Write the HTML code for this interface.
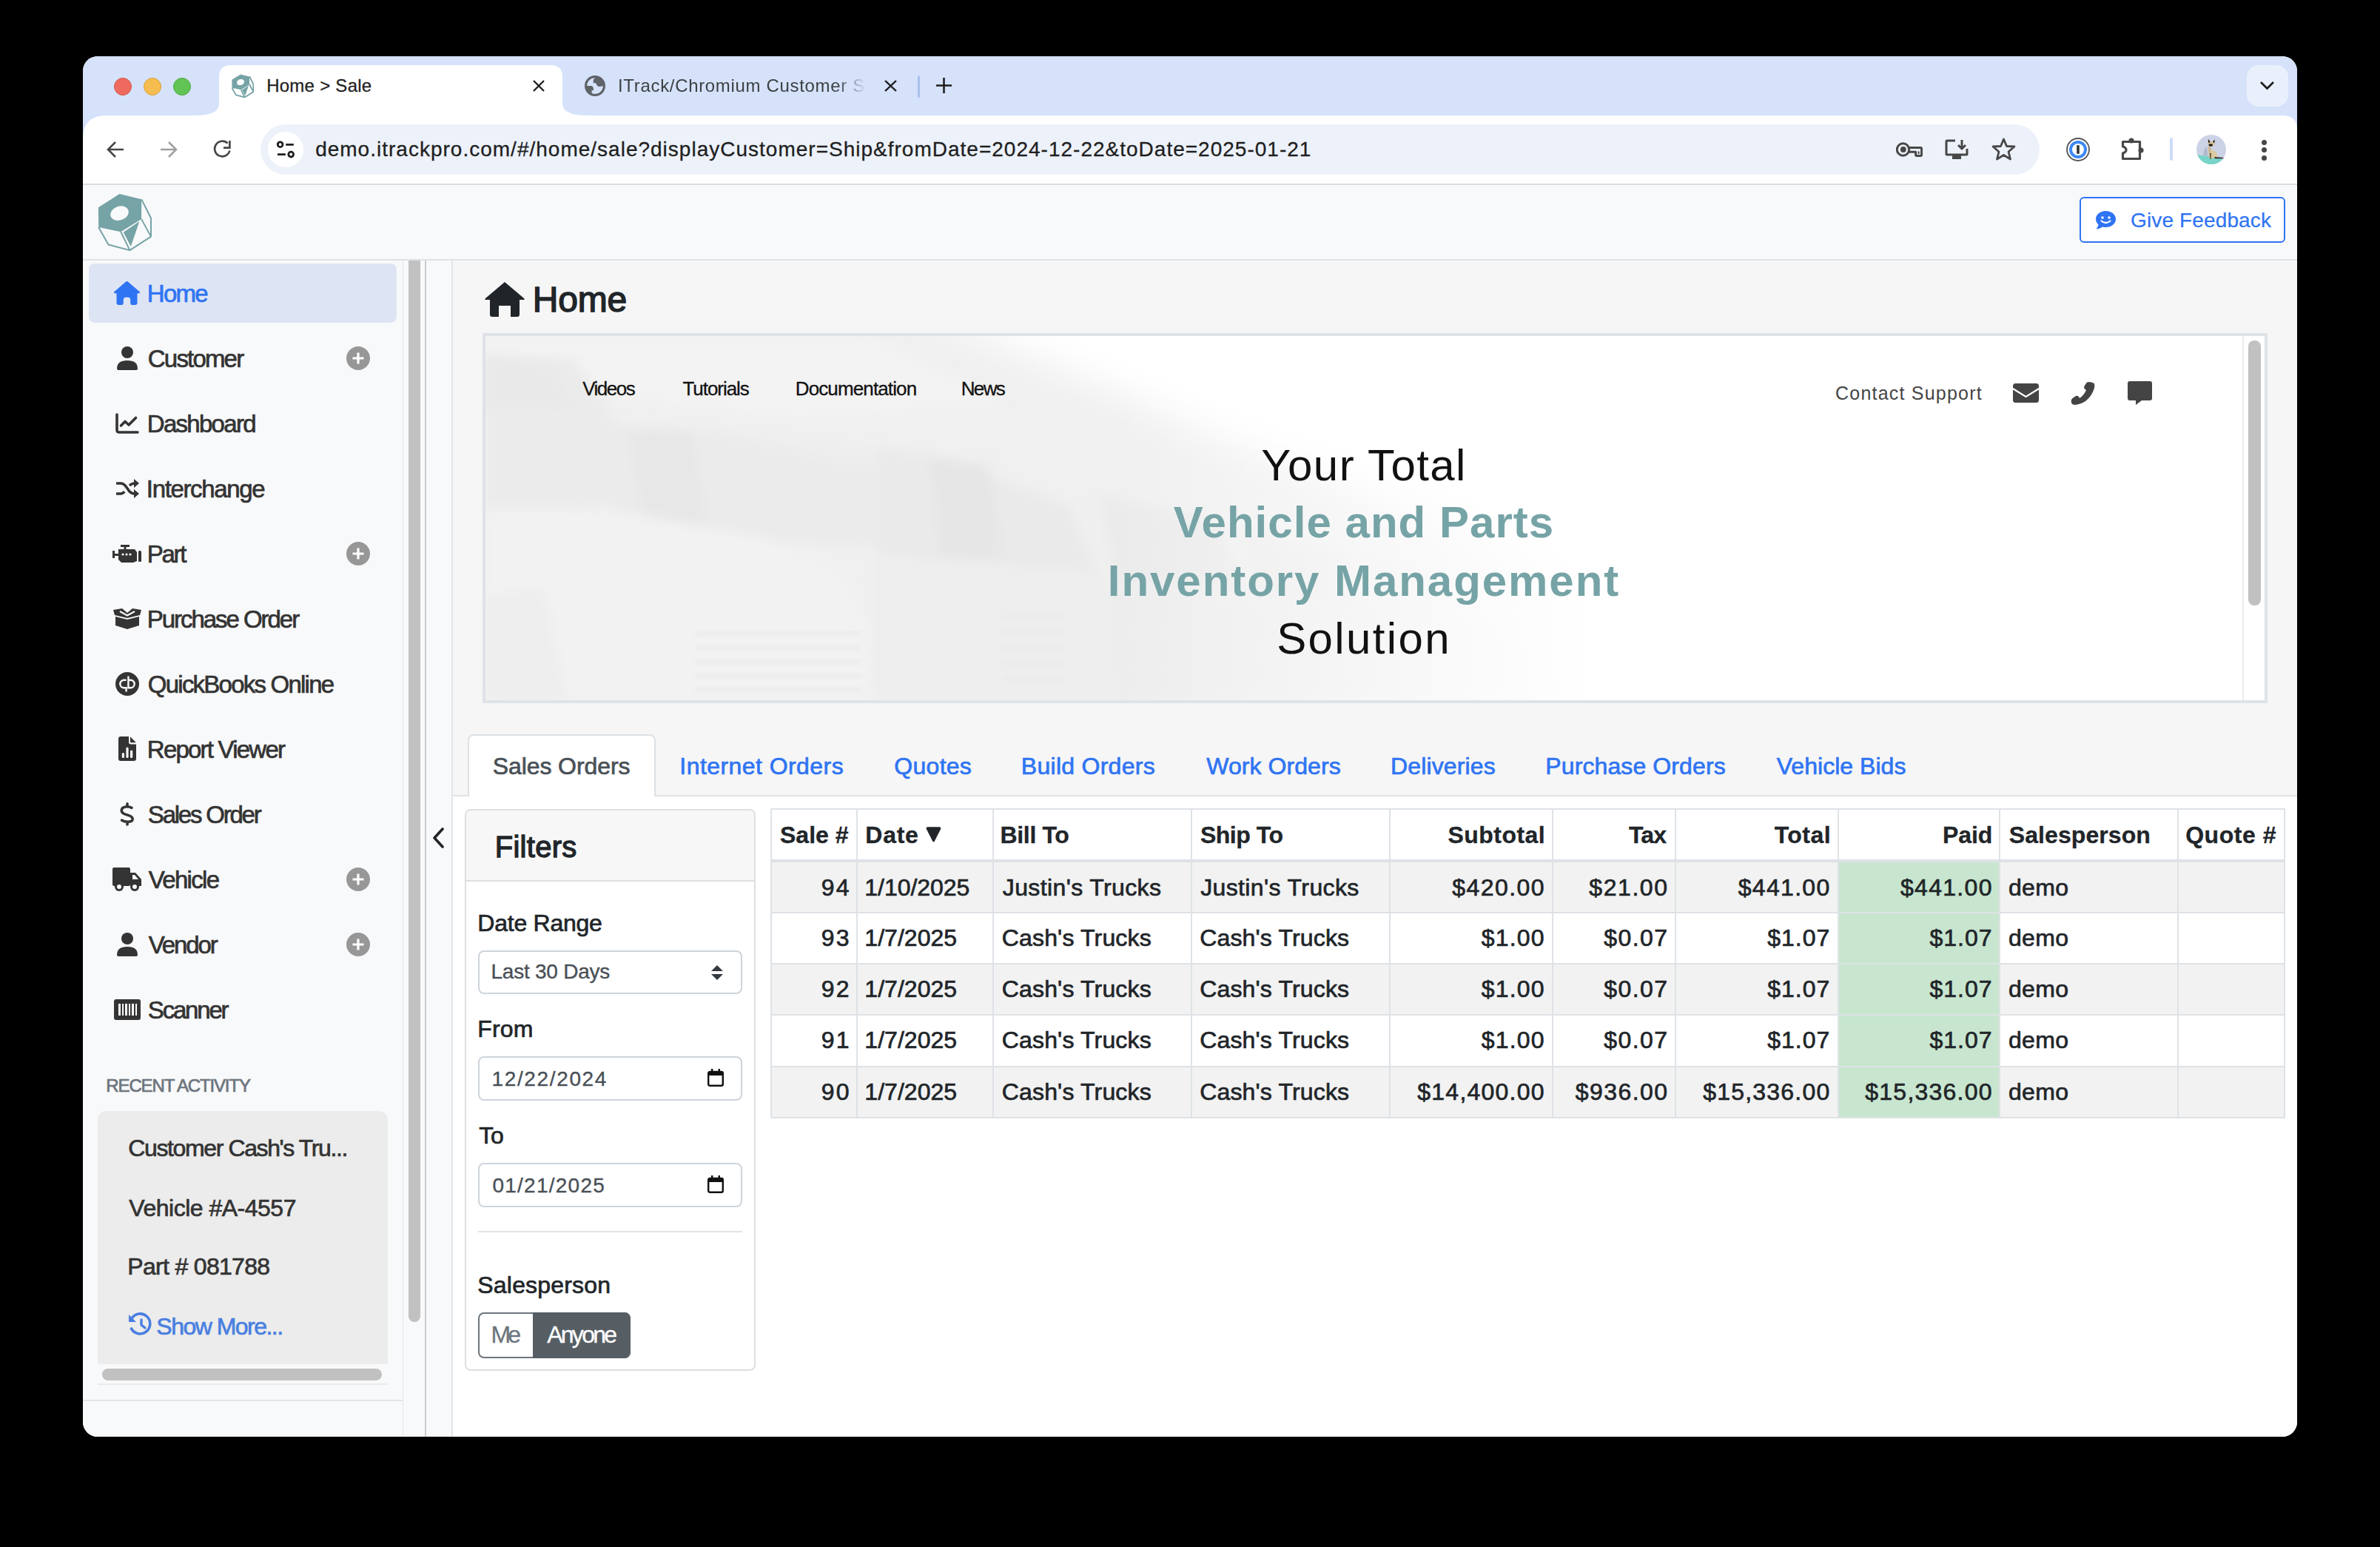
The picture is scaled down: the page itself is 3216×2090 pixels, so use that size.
<!DOCTYPE html>
<html><head><meta charset="utf-8"><title>Home &gt; Sale</title>
<style>
html,body{margin:0;padding:0;}
body{width:3216px;height:2090px;background:#000;position:relative;overflow:hidden;font-family:'Liberation Sans', sans-serif;}
.a{position:absolute;box-sizing:border-box;}
.t{position:absolute;white-space:nowrap;font-family:'Liberation Sans', sans-serif;}
#win{position:absolute;left:0;top:0;width:3216px;height:2090px;clip-path:inset(76px 112px 149px 112px round 20px);background:#fff;}
</style></head><body><div id="win">
<div class="a" style="left:112px;top:76px;width:2992px;height:80px;background:#d5e2fa;"></div>
<div class="a" style="left:154px;top:105px;width:24px;height:24px;background:#ee6a5f;border-radius:50%;border:1px solid #d55548;"></div>
<div class="a" style="left:194px;top:105px;width:24px;height:24px;background:#f5bd4f;border-radius:50%;border:1px solid #d9a13a;"></div>
<div class="a" style="left:234px;top:105px;width:24px;height:24px;background:#61c454;border-radius:50%;border:1px solid #4ea83f;"></div>
<svg class="a" style="left:264px;top:88px;width:530px;height:68px" viewBox="0 0 530 68"><path d="M0 68 Q32 68 32 52 L32 16 Q32 0 48 0 L480 0 Q496 0 496 16 L496 52 Q496 68 530 68 Z" fill="#fff"/></svg>
<svg class="a" style="left:313px;top:100px;width:30px;height:32px;" viewBox="11 5 74 79" preserveAspectRatio="none"><path d="M11.9 24.4 L40.7 6.1 L70.7 13.4 L70.4 40.1 L42.5 57.6 L12.2 51.2 Z M28.6 32.3 A12.2 9.2 -20 1 0 52.8 32.3 A12.2 9.2 -20 1 0 28.6 32.3 Z" fill="#76a3a6" fill-rule="evenodd"/><path d="M12.2 51.2 L25.6 75 L54.7 82.6 L83.5 64 L83.5 39 L70.7 13.4 M42.5 57.6 L54.7 82.6 M70.4 40.1 L83.5 64" fill="none" stroke="#76a3a6" stroke-width="4.5" stroke-linejoin="round"/><polygon points="46,58.2 67.8,43.3 56.1,77.4" fill="#76a3a6"/></svg>
<div id="t0" class="t" style="left:360.15px;top:103.7px;font-size:24px;line-height:24px;color:#1f1f1f;letter-spacing:0.264px;-webkit-text-stroke:0.3px #1f1f1f;">Home &gt; Sale</div>
<svg class="a" style="left:720px;top:108px;width:16px;height:16px;" viewBox="0 0 16 16" preserveAspectRatio="none"><path d="M1 1 L15 15 M15 1 L1 15" stroke="#1f1f1f" stroke-width="2.4"/></svg>
<svg class="a" style="left:790px;top:102px;width:28px;height:28px;" viewBox="0 0 28 28" preserveAspectRatio="none"><circle cx="14" cy="14" r="12.4" fill="none" stroke="#5f6368" stroke-width="3.2"/><path d="M16.6 2.2 Q13.2 3 11.8 5.8 L11.8 10.2 L15.3 10.3 Q15.6 13.2 18.5 14.8 Q22 15.6 26 13.6 L26 8 L21 2.5 Z M1.8 14 H8.5 Q11.6 14.3 11.9 17.6 V20.3 H9.6 V25 L5.5 23.5 L2 18 Z" fill="#5f6368"/></svg>
<div id="t1" class="t" style="left:835.00px;top:103.7px;font-size:24px;line-height:24px;color:#3c4043;letter-spacing:0.673px;-webkit-mask-image:linear-gradient(90deg,#000 295px,transparent 335px);">ITrack/Chromium Customer Se</div>
<svg class="a" style="left:1195px;top:108px;width:17px;height:16px;" viewBox="0 0 16 16" preserveAspectRatio="none"><path d="M1 1 L15 15 M15 1 L1 15" stroke="#1f1f1f" stroke-width="2.4"/></svg>
<div class="a" style="left:1240px;top:102px;width:3px;height:30px;background:#a8c0ee;border-radius:2px;"></div>
<svg class="a" style="left:1265px;top:105px;width:21px;height:21px;" viewBox="0 0 21 21" preserveAspectRatio="none"><path d="M10.5 0 V21 M0 10.5 H21" stroke="#1f1f1f" stroke-width="2.6"/></svg>
<div class="a" style="left:3036px;top:88px;width:56px;height:56px;background:#eaf0fb;border-radius:16px;"></div>
<svg class="a" style="left:3053px;top:109px;width:21px;height:13px;" viewBox="0 0 21 13" preserveAspectRatio="none"><path d="M2 2 L10.5 10.5 L19 2" fill="none" stroke="#1f1f1f" stroke-width="2.8"/></svg>
<div class="a" style="left:112px;top:156px;width:2992px;height:93px;background:#fff;border-radius:0;"></div>
<svg class="a" style="left:3084px;top:156px;width:20px;height:20px" viewBox="0 0 20 20"><path d="M0 0 H20 V20 Q20 0 0 0Z" fill="#d5e2fa"/></svg>
<svg class="a" style="left:112px;top:156px;width:32px;height:32px" viewBox="0 0 32 32"><path d="M0 0 H32 Q0 0 0 32Z" fill="#d5e2fa"/></svg>
<div class="a" style="left:112px;top:248px;width:2992px;height:2px;background:#dadce0;"></div>
<svg class="a" style="left:144px;top:190px;width:24px;height:24px;" viewBox="0 0 24 24" preserveAspectRatio="none"><path d="M23 12 H3 M12 2 L2 12 L12 22" fill="none" stroke="#474747" stroke-width="2.6"/></svg>
<svg class="a" style="left:216px;top:190px;width:24px;height:24px;" viewBox="0 0 24 24" preserveAspectRatio="none"><path d="M1 12 H21 M12 2 L22 12 L12 22" fill="none" stroke="#a0a0a0" stroke-width="2.6"/></svg>
<svg class="a" style="left:287px;top:189px;width:26px;height:25px;" viewBox="0 0 26 25" preserveAspectRatio="none"><path d="M20.6 4.6 A10.3 10.3 0 1 0 23.4 14.5" fill="none" stroke="#474747" stroke-width="2.7"/><path d="M15 10.6 H23.4 V1" fill="none" stroke="#474747" stroke-width="2.7"/></svg>
<div class="a" style="left:352px;top:168px;width:2404px;height:68px;background:#edf2fa;border-radius:34px;"></div>
<div class="a" style="left:362px;top:178px;width:48px;height:48px;background:#fff;border-radius:50%;"></div>
<svg class="a" style="left:374px;top:190px;width:24px;height:24px;" viewBox="0 0 24 24" preserveAspectRatio="none"><circle cx="4.6" cy="5.2" r="3.4" fill="none" stroke="#1f1f1f" stroke-width="2.8"/><path d="M12.2 5.3 H22.8 M1 18.6 H11.9" stroke="#1f1f1f" stroke-width="2.8"/><circle cx="19.2" cy="18.6" r="3.4" fill="none" stroke="#1f1f1f" stroke-width="2.8"/></svg>
<div id="t2" class="t" style="left:426.15px;top:188.3px;font-size:28px;line-height:28px;color:#1f1f1f;letter-spacing:1.005px;-webkit-text-stroke:0.3px #1f1f1f;">demo.itrackpro.com/#/home/sale?displayCustomer=Ship&amp;fromDate=2024-12-22&amp;toDate=2025-01-21</div>
<svg class="a" style="left:2562px;top:192px;width:36px;height:20px;" viewBox="0 0 36 20" preserveAspectRatio="none"><circle cx="9.5" cy="10" r="8.2" fill="none" stroke="#474747" stroke-width="3"/><circle cx="9.8" cy="10" r="3.9" fill="#474747"/><path d="M17.5 7.6 H33.3 Q34.6 7.6 34.6 9 V17 Q34.6 18.5 33.2 18.5 H28 Q26.6 18.5 26.6 17 V13.2 H17.5" fill="none" stroke="#474747" stroke-width="3" stroke-linejoin="round"/><path d="M30.6 12.5 V16" stroke="#474747" stroke-width="2"/></svg>
<svg class="a" style="left:2628px;top:188px;width:32px;height:29px;" viewBox="0 0 32 29" preserveAspectRatio="none"><path d="M14 2 H3 Q2 2 2 3 V20 Q2 21 3 21 H29 Q30 21 30 20 V13" fill="none" stroke="#474747" stroke-width="3"/><rect x="10" y="22" width="12" height="5" fill="#474747"/><path d="M23 1 V13 M18 8 L23 13 L28 8" fill="none" stroke="#474747" stroke-width="3"/></svg>
<svg class="a" style="left:2691px;top:186px;width:33px;height:31px;" viewBox="0 0 33 31" preserveAspectRatio="none"><path d="M16.5 2 L20.5 11.5 L31 12 L23 19 L25.5 29 L16.5 23.5 L7.5 29 L10 19 L2 12 L12.5 11.5 Z" fill="none" stroke="#474747" stroke-width="2.8" stroke-linejoin="round"/></svg>
<svg class="a" style="left:2792px;top:186px;width:32px;height:32px;" viewBox="0 0 32 32" preserveAspectRatio="none"><circle cx="16" cy="16" r="15" fill="none" stroke="#555" stroke-width="1.8"/><circle cx="16" cy="16" r="10" fill="none" stroke="#3d88f5" stroke-width="4"/><rect x="14.2" y="10.2" width="3.6" height="11.6" fill="#333"/></svg>
<svg class="a" style="left:2864px;top:182px;width:36px;height:36px;" viewBox="0 0 36 36" preserveAspectRatio="none"><path d="M4.5 9.5 H27.5 V32.5 H4.5 V25 Q9 23.5 9 20.5 Q9 17.5 4.5 16 Z" fill="none" stroke="#474747" stroke-width="3.2" stroke-linejoin="round"/><circle cx="16" cy="8" r="3.6" fill="#474747"/><circle cx="29" cy="21" r="3.6" fill="#474747"/></svg>
<div class="a" style="left:2932px;top:186px;width:4px;height:31px;background:#cbdcf7;border-radius:2px;"></div>
<svg class="a" style="left:2968px;top:182px;width:40px;height:40px;" viewBox="0 0 40 40" preserveAspectRatio="none"><defs><clipPath id="av"><circle cx="20" cy="20" r="20"/></clipPath></defs><g clip-path="url(#av)"><rect width="40" height="40" fill="#cdd3e6"/><path d="M9 28 L10.5 20 L14 16 L15.5 29 Z" fill="#b3b8c8"/><polygon points="0,27 40,32.5 40,40 0,40" fill="#78d4c8"/><path d="M15.5 16 L19.5 17 L20.5 32 L17.5 32.5 Z" fill="#cdb88f"/><path d="M19.5 21 Q26 21 27.5 25 L28 31 L20 32 Z" fill="#dcc9a0"/><path d="M24 30 L37 31 L37 32.2 L25 32.2 Z" fill="#3a2a26"/><path d="M15.8 5.8 L18.6 9.6 L22 9.6 L24.6 6.6 L24.4 12.5 L22.2 16 L17.3 16 L15.5 12 Z" fill="#d8c49a"/><path d="M15.8 5.8 L18.6 9.6 L16.2 11.5 Z M24.6 6.6 L22 9.6 L24.4 11.5 Z" fill="#1f1a18"/><ellipse cx="19.2" cy="14" rx="2.8" ry="1.8" fill="#1f1a18"/><path d="M18.2 25 L19.8 25 L19.5 33 L18.5 33 Z" fill="#4a3b2f"/></g></svg>
<div class="a" style="left:3056px;top:188.5px;width:7px;height:7.0px;background:#474747;border-radius:50%;"></div>
<div class="a" style="left:3056px;top:198.5px;width:7px;height:7.0px;background:#474747;border-radius:50%;"></div>
<div class="a" style="left:3056px;top:209.5px;width:7px;height:7.0px;background:#474747;border-radius:50%;"></div>
<div class="a" style="left:112px;top:250px;width:2992px;height:100px;background:#f8f9fa;"></div>
<div class="a" style="left:112px;top:350px;width:2992px;height:2px;background:#dee2e6;"></div>
<svg class="a" style="left:131.5px;top:260.5px;width:73.5px;height:78.5px;" viewBox="11 5 74 79" preserveAspectRatio="none"><path d="M11.9 24.4 L40.7 6.1 L70.7 13.4 L70.4 40.1 L42.5 57.6 L12.2 51.2 Z M28.6 32.3 A12.2 9.2 -20 1 0 52.8 32.3 A12.2 9.2 -20 1 0 28.6 32.3 Z" fill="#76a3a6" fill-rule="evenodd"/><path d="M12.2 51.2 L25.6 75 L54.7 82.6 L83.5 64 L83.5 39 L70.7 13.4 M42.5 57.6 L54.7 82.6 M70.4 40.1 L83.5 64" fill="none" stroke="#76a3a6" stroke-width="2.0" stroke-linejoin="round"/><polygon points="46,58.2 67.8,43.3 56.1,77.4" fill="#76a3a6"/></svg>
<div class="a" style="left:2810px;top:266px;width:278px;height:62px;background:#ffffff;border:2px solid #2f74f3;border-radius:6px;"></div>
<svg class="a" style="left:2831px;top:284px;width:29px;height:26px;" viewBox="0 0 29 26" preserveAspectRatio="none"><path d="M14.5 1 C6.5 1 1 6 1 12 C1 15 2.5 17.5 4.5 19.5 C4 22 2.5 24 1.5 25.5 C5 25.5 8 24 10 22.5 C11.5 23 13 23 14.5 23 C22.5 23 28 18 28 12 C28 6 22.5 1 14.5 1 Z" fill="#2f74f3"/><circle cx="10" cy="10" r="1.8" fill="#fff"/><circle cx="19" cy="10" r="1.8" fill="#fff"/><path d="M8.5 14.5 Q14.5 19.5 20.5 14.5" fill="none" stroke="#fff" stroke-width="2.2" stroke-linecap="round"/></svg>
<div id="t3" class="t" style="left:2879.10px;top:283.8px;font-size:28px;line-height:28px;color:#2f74f3;letter-spacing:0.124px;-webkit-text-stroke:0.2px #2f74f3;">Give Feedback</div>
<div class="a" style="left:112px;top:352px;width:432px;height:1540px;background:#f8f9fa;"></div>
<div class="a" style="left:112px;top:1891px;width:432px;height:2px;background:#e3e5e8;"></div>
<div class="a" style="left:112px;top:1893px;width:432px;height:48px;background:#f8f9fa;"></div>
<div class="a" style="left:544px;top:352px;width:1px;height:1589px;background:#e6e6e6;"></div>
<div class="a" style="left:545px;top:352px;width:29px;height:1589px;background:#f8f9fa;"></div>
<div class="a" style="left:552px;top:352px;width:16px;height:1434px;background:#c1c1c1;border-radius:0 0 8px 8px;"></div>
<div class="a" style="left:574px;top:352px;width:2px;height:1589px;background:#cdcdcd;"></div>
<div class="a" style="left:576px;top:352px;width:35px;height:1589px;background:#f8f9fa;"></div>
<div class="a" style="left:610px;top:352px;width:2px;height:1589px;background:#e2e4e7;"></div>
<svg class="a" style="left:584px;top:1118px;width:16px;height:28px;" viewBox="0 0 16 28" preserveAspectRatio="none"><path d="M14 2 L3 14 L14 26" fill="none" stroke="#212529" stroke-width="3.6" stroke-linecap="round" stroke-linejoin="round"/></svg>
<div class="a" style="left:120px;top:356px;width:416px;height:80px;background:#dde5f4;border-radius:8px;"></div>
<div id="t4" class="t" style="left:198.85px;top:380.1px;font-size:33px;line-height:33px;color:#2f74f3;letter-spacing:-1.791px;-webkit-text-stroke:0.7px #2f74f3;">Home</div>
<div id="t5" class="t" style="left:199.85px;top:468.1px;font-size:33px;line-height:33px;color:#333333;letter-spacing:-1.821px;-webkit-text-stroke:0.7px #333333;">Customer</div>
<div id="t6" class="t" style="left:198.85px;top:556.1px;font-size:33px;line-height:33px;color:#333333;letter-spacing:-1.723px;-webkit-text-stroke:0.7px #333333;">Dashboard</div>
<div id="t7" class="t" style="left:197.85px;top:644.1px;font-size:33px;line-height:33px;color:#333333;letter-spacing:-1.364px;-webkit-text-stroke:0.7px #333333;">Interchange</div>
<div id="t8" class="t" style="left:198.85px;top:732.1px;font-size:33px;line-height:33px;color:#333333;letter-spacing:-2.351px;-webkit-text-stroke:0.7px #333333;">Part</div>
<div id="t9" class="t" style="left:198.85px;top:820.1px;font-size:33px;line-height:33px;color:#333333;letter-spacing:-2.050px;-webkit-text-stroke:0.7px #333333;">Purchase Order</div>
<div id="t10" class="t" style="left:199.85px;top:908.1px;font-size:33px;line-height:33px;color:#333333;letter-spacing:-1.773px;-webkit-text-stroke:0.7px #333333;">QuickBooks Online</div>
<div id="t11" class="t" style="left:198.85px;top:996.1px;font-size:33px;line-height:33px;color:#333333;letter-spacing:-1.783px;-webkit-text-stroke:0.7px #333333;">Report Viewer</div>
<div id="t12" class="t" style="left:199.85px;top:1084.1px;font-size:33px;line-height:33px;color:#333333;letter-spacing:-2.228px;-webkit-text-stroke:0.7px #333333;">Sales Order</div>
<div id="t13" class="t" style="left:200.85px;top:1172.1px;font-size:33px;line-height:33px;color:#333333;letter-spacing:-1.710px;-webkit-text-stroke:0.7px #333333;">Vehicle</div>
<div id="t14" class="t" style="left:200.85px;top:1260.1px;font-size:33px;line-height:33px;color:#333333;letter-spacing:-2.160px;-webkit-text-stroke:0.7px #333333;">Vendor</div>
<div id="t15" class="t" style="left:199.85px;top:1348.1px;font-size:33px;line-height:33px;color:#333333;letter-spacing:-2.204px;-webkit-text-stroke:0.7px #333333;">Scanner</div>
<svg class="a" style="left:468px;top:467.5px;width:32px;height:32.0px;" viewBox="0 0 32 32" preserveAspectRatio="none"><circle cx="16" cy="16" r="16" fill="#979797"/><path d="M16 8.5 V23.5 M8.5 16 H23.5" stroke="#fff" stroke-width="3.2"/></svg>
<svg class="a" style="left:468px;top:731.5px;width:32px;height:32.0px;" viewBox="0 0 32 32" preserveAspectRatio="none"><circle cx="16" cy="16" r="16" fill="#979797"/><path d="M16 8.5 V23.5 M8.5 16 H23.5" stroke="#fff" stroke-width="3.2"/></svg>
<svg class="a" style="left:468px;top:1171.5px;width:32px;height:32.0px;" viewBox="0 0 32 32" preserveAspectRatio="none"><circle cx="16" cy="16" r="16" fill="#979797"/><path d="M16 8.5 V23.5 M8.5 16 H23.5" stroke="#fff" stroke-width="3.2"/></svg>
<svg class="a" style="left:468px;top:1259.5px;width:32px;height:32.0px;" viewBox="0 0 32 32" preserveAspectRatio="none"><circle cx="16" cy="16" r="16" fill="#979797"/><path d="M16 8.5 V23.5 M8.5 16 H23.5" stroke="#fff" stroke-width="3.2"/></svg>
<svg class="a" style="left:153px;top:379px;width:37px;height:33px;" viewBox="0 0 37 33" preserveAspectRatio="none"><path d="M17.2 1.6 Q18.5 0.6 19.8 1.6 L35.5 15 Q37 16.8 34.8 17.3 L32.5 17.3 L32.5 30 Q32.5 33 29.5 33 L25.5 33 Q23.2 33 23.2 30.5 L23.2 25.5 Q23.2 22.5 18.5 22.5 Q13.8 22.5 13.8 25.5 L13.8 30.5 Q13.8 33 11.5 33 L7.5 33 Q4.5 33 4.5 30 L4.5 17.3 L2.2 17.3 Q0 16.8 1.5 15 Z" fill="#2f74f3"/></svg>
<svg class="a" style="left:158px;top:468px;width:28px;height:32px;" viewBox="0 0 28 32" preserveAspectRatio="none"><circle cx="14" cy="8" r="8" fill="#343434"/><path d="M0 30 Q0 19 14 19 Q28 19 28 30 Q28 32 26 32 L2 32 Q0 32 0 30Z" fill="#343434"/></svg>
<svg class="a" style="left:156px;top:558px;width:32px;height:28px;" viewBox="0 0 32 28" preserveAspectRatio="none"><path d="M2 2 V23 Q2 26 5 26 H30" fill="none" stroke="#343434" stroke-width="3.6" stroke-linecap="round"/><path d="M7.5 17 L13 11.5 L18 16 L27.5 6.5" fill="none" stroke="#343434" stroke-width="3.6" stroke-linejoin="round" stroke-linecap="round"/></svg>
<svg class="a" style="left:156px;top:646px;width:33px;height:28px;" viewBox="0 0 33 28" preserveAspectRatio="none"><path d="M1 7 H7 Q11 7 14 11 L19 18 Q22 21 26 21 H27 M1 21 H7 Q10 21 12 18 M19 10 Q22 7 26 7 H27" fill="none" stroke="#343434" stroke-width="3.6"/><path d="M25 1 L32 7 L25 13 Z M25 15 L32 21 L25 27 Z" fill="#343434"/></svg>
<svg class="a" style="left:152px;top:736px;width:40px;height:24px;" viewBox="0 0 40 24" preserveAspectRatio="none"><rect x="11" y="0" width="12" height="3" fill="#343434"/><rect x="15.5" y="2" width="3" height="4" fill="#343434"/><path d="M8 6 H30 L33 10 V22 L28 24 H12 L8 20 Z" fill="#343434"/><rect x="0" y="8" width="3" height="10" fill="#343434"/><rect x="2" y="12" width="6" height="3" fill="#343434"/><rect x="35" y="8" width="4" height="15" rx="1.5" fill="#343434"/><circle cx="14" cy="13" r="1.6" fill="#f8f9fa"/><circle cx="19" cy="13" r="1.6" fill="#f8f9fa"/><circle cx="24" cy="13" r="1.6" fill="#f8f9fa"/></svg>
<svg class="a" style="left:153px;top:822px;width:38px;height:28px;" viewBox="0 0 38 28" preserveAspectRatio="none"><path d="M0 2 L12 0 L19 6 L26 0 L38 2 L36 9 L19 13 L2 9 Z" fill="#343434"/><path d="M3 11 L19 15 L35 11 V23 L19 28 L3 23 Z" fill="#343434"/><path d="M9 4 L19 9.5 L29 4" fill="none" stroke="#f8f9fa" stroke-width="2"/></svg>
<svg class="a" style="left:156px;top:908px;width:32px;height:32px;" viewBox="0 0 32 32" preserveAspectRatio="none"><circle cx="16" cy="16" r="16" fill="#343434"/><path d="M14.6 10.8 H11.5 A5.2 5.2 0 0 0 11.5 21.2 H14.6 V26.5 M17.4 5.5 V21.2 H20.5 A5.2 5.2 0 0 0 20.5 10.8 H17.4" fill="none" stroke="#f8f9fa" stroke-width="2.4"/></svg>
<svg class="a" style="left:160px;top:995px;width:24px;height:33px;" viewBox="0 0 24 33" preserveAspectRatio="none"><path d="M3 0 H14 V7.5 Q14 10.5 17 10.5 H24 V30 Q24 33 21 33 H3 Q0 33 0 30 V3 Q0 0 3 0 Z" fill="#343434"/><path d="M16 0.3 L23.8 8.3 H17 Q16 8.3 16 7.3 Z" fill="#343434"/><rect x="4.8" y="22" width="3.2" height="7" rx="1.6" fill="#f8f9fa"/><rect x="10.4" y="14.5" width="3.2" height="14.5" rx="1.6" fill="#f8f9fa"/><rect x="16" y="18.5" width="3.2" height="10.5" rx="1.6" fill="#f8f9fa"/></svg>
<svg class="a" style="left:162px;top:1084px;width:20px;height:32px;" viewBox="0 0 20 32" preserveAspectRatio="none"><path d="M16 7.3 Q12 5.3 8.5 5.8 Q2.2 6.8 2.2 11 Q2.2 14.6 8 16.4 L12 17.6 Q17.2 19.2 17.2 22.6 Q17.2 26.4 10.5 26.3 Q6 26.2 2.6 24.2 M10 1.8 V6 M10 26.3 V30" fill="none" stroke="#343434" stroke-width="3.6" stroke-linecap="round" stroke-linejoin="round"/></svg>
<svg class="a" style="left:152px;top:1172px;width:40px;height:33px;" viewBox="0 0 40 33" preserveAspectRatio="none"><rect x="0" y="0" width="24" height="25" rx="2" fill="#343434"/><path d="M24 7 H31 L39 16 V25 H24Z" fill="#343434"/><path d="M27 10 H30 L35 16 H27Z" fill="#f8f9fa"/><circle cx="9" cy="26" r="6" fill="#343434"/><circle cx="9" cy="26" r="3" fill="#f8f9fa"/><circle cx="30" cy="26" r="6" fill="#343434"/><circle cx="30" cy="26" r="3" fill="#f8f9fa"/></svg>
<svg class="a" style="left:158px;top:1260px;width:28px;height:32px;" viewBox="0 0 28 32" preserveAspectRatio="none"><circle cx="14" cy="8" r="8" fill="#343434"/><path d="M0 30 Q0 19 14 19 Q28 19 28 30 Q28 32 26 32 L2 32 Q0 32 0 30Z" fill="#343434"/></svg>
<svg class="a" style="left:154px;top:1350px;width:36px;height:28px;" viewBox="0 0 36 28" preserveAspectRatio="none"><rect x="0" y="0" width="36" height="28" rx="3" fill="#343434"/><rect x="6" y="6" width="3" height="16" fill="#f8f9fa"/><rect x="11" y="6" width="2" height="16" fill="#f8f9fa"/><rect x="15" y="6" width="3" height="16" fill="#f8f9fa"/><rect x="20" y="6" width="2" height="16" fill="#f8f9fa"/><rect x="24" y="6" width="3" height="16" fill="#f8f9fa"/><rect x="29" y="6" width="2" height="16" fill="#f8f9fa"/></svg>
<div id="t16" class="t" style="left:143.35px;top:1454.7px;font-size:24px;line-height:24px;color:#6c757d;letter-spacing:-1.146px;-webkit-text-stroke:0.7px #6c757d;">RECENT ACTIVITY</div>
<div class="a" style="left:132px;top:1501px;width:392px;height:342px;background:#ececec;border-radius:12px 12px 0 0;"></div>
<div id="t17" class="t" style="left:173.35px;top:1534.9px;font-size:32px;line-height:32px;color:#333333;letter-spacing:-1.390px;-webkit-text-stroke:0.7px #333333;">Customer Cash's Tru...</div>
<div id="t18" class="t" style="left:174.35px;top:1615.9px;font-size:32px;line-height:32px;color:#333333;letter-spacing:-0.498px;-webkit-text-stroke:0.7px #333333;">Vehicle #A-4557</div>
<div id="t19" class="t" style="left:172.35px;top:1695.4px;font-size:32px;line-height:32px;color:#333333;letter-spacing:-0.688px;-webkit-text-stroke:0.7px #333333;">Part # 081788</div>
<svg class="a" style="left:174px;top:1773px;width:32px;height:33px;" viewBox="0 0 32 33" preserveAspectRatio="none"><path d="M4 8 A13.5 13.5 0 1 1 3.5 22" fill="none" stroke="#4a7fe0" stroke-width="3.6" stroke-linecap="round"/><path d="M0 3 L0 13 L10 13 Z" fill="#4a7fe0"/><path d="M17 10 V17 L22 21" fill="none" stroke="#4a7fe0" stroke-width="3.4" stroke-linecap="round"/></svg>
<div id="t20" class="t" style="left:211.35px;top:1775.9px;font-size:32px;line-height:32px;color:#4a7fe0;letter-spacing:-1.530px;-webkit-text-stroke:0.7px #4a7fe0;">Show More...</div>
<div class="a" style="left:138px;top:1849px;width:378px;height:16px;background:#c1c1c1;border-radius:8px;"></div>
<div class="a" style="left:132px;top:1869px;width:392px;height:2px;background:#ebebeb;"></div>
<div class="a" style="left:612px;top:352px;width:2492px;height:723px;background:#f6f6f6;"></div>
<div class="a" style="left:612px;top:1075px;width:2492px;height:866px;background:#ffffff;"></div>
<svg class="a" style="left:654px;top:380px;width:56px;height:48px;" viewBox="0 0 56 48" preserveAspectRatio="none"><path d="M28 1 L54 23 Q56 25 53 25 L48 25 L48 45 Q48 48 45 48 L36 48 L36 33 L20 33 L20 48 L11 48 Q8 48 8 45 L8 25 L3 25 Q0 25 2 23 Z" fill="#212529"/></svg>
<div id="t21" class="t" style="left:719.75px;top:381.4px;font-size:48px;line-height:48px;color:#212529;letter-spacing:-0.181px;-webkit-text-stroke:1.5px #212529;">Home</div>
<div class="a" style="left:652px;top:450px;width:2412px;height:500px;background:#ffffff;border:4px solid #dfe2e7;"></div>
<div class="a" style="left:656px;top:454px;width:2374px;height:492px;overflow:hidden;background:#fff"><svg style="position:absolute;left:0;top:0" width="2374" height="492" viewBox="0 0 2374 492"><defs><filter id="b25" x="-20%" y="-20%" width="140%" height="140%"><feGaussianBlur stdDeviation="25"/></filter><filter id="b8" x="-10%" y="-10%" width="120%" height="120%"><feGaussianBlur stdDeviation="8"/></filter><filter id="b3"><feGaussianBlur stdDeviation="3"/></filter><linearGradient id="fd" gradientUnits="userSpaceOnUse" x1="850" y1="0" x2="1500" y2="0"><stop offset="0" stop-color="#fff" stop-opacity="0"/><stop offset="1" stop-color="#fff" stop-opacity="1"/></linearGradient></defs><polygon points="-50,-50 560,-50 1000,140 1500,320 1800,560 -50,560" fill="#f0f0f0" filter="url(#b25)"/><polygon points="0,0 520,0 700,90 420,110 0,60" fill="#f3f3f3" filter="url(#b8)"/><polygon points="0,25 120,30 178,120 190,229 0,235" fill="#ebebeb" filter="url(#b8)"/><polygon points="0,30 90,40 120,100 0,100" fill="#e9e9e9" filter="url(#b8)"/><polygon points="280,120 520,150 540,190 300,185" fill="#eeeeee" filter="url(#b8)"/><polygon points="160,120 300,130 540,185 560,285 330,275 180,260" fill="#ebebeb" filter="url(#b8)"/><polygon points="195,128 280,130 300,265 215,262" fill="#e7e7e7" filter="url(#b8)"/><polygon points="0,235 200,240 360,270 480,320 520,400 520,492 0,492" fill="#f2f2f2" filter="url(#b8)"/><polygon points="0,350 80,340 110,492 0,492" fill="#eeeeee" filter="url(#b8)"/><rect x="283" y="398" width="225" height="8" fill="#ececec" filter="url(#b3)"/><rect x="283" y="417" width="225" height="8" fill="#ececec" filter="url(#b3)"/><rect x="283" y="436" width="225" height="8" fill="#ececec" filter="url(#b3)"/><rect x="283" y="455" width="225" height="8" fill="#ececec" filter="url(#b3)"/><rect x="283" y="474" width="225" height="8" fill="#ececec" filter="url(#b3)"/><polygon points="525,150 600,160 790,230 830,330 600,310 530,300" fill="#eaeaea" filter="url(#b8)"/><polygon points="600,165 680,175 700,300 615,300" fill="#e6e6e6" filter="url(#b8)"/><polygon points="525,300 830,320 880,492 525,492" fill="#eeeeee" filter="url(#b8)"/><rect x="700" y="375" width="80" height="8" fill="#ebebeb" filter="url(#b3)"/><rect x="700" y="396" width="80" height="8" fill="#ebebeb" filter="url(#b3)"/><rect x="700" y="417" width="80" height="8" fill="#ebebeb" filter="url(#b3)"/><rect x="700" y="438" width="80" height="8" fill="#ebebeb" filter="url(#b3)"/><rect x="700" y="459" width="80" height="8" fill="#ebebeb" filter="url(#b3)"/><polygon points="830,215 990,250 1030,345 850,335" fill="#ebebeb" filter="url(#b8)"/><polygon points="1020,265 1160,290 1190,370 1040,360" fill="#ececec" filter="url(#b8)"/><polygon points="1180,300 1300,320 1320,390 1190,385" fill="#ededed" filter="url(#b8)"/><polygon points="840,335 1350,385 1500,492 860,492" fill="#ededed" filter="url(#b8)"/><rect x="0" y="0" width="2374" height="492" fill="url(#fd)"/></svg></div>
<div class="a" style="left:3030px;top:454px;width:2px;height:492px;background:#ececec;"></div>
<div class="a" style="left:3038px;top:460px;width:17px;height:358px;background:#c1c1c1;border-radius:8px;"></div>
<div id="t22" class="t" style="left:787.15px;top:512.4px;font-size:26px;line-height:26px;color:#111111;letter-spacing:-1.466px;-webkit-text-stroke:0.3px #111111;">Videos</div>
<div id="t23" class="t" style="left:922.45px;top:512.4px;font-size:26px;line-height:26px;color:#111111;letter-spacing:-1.041px;-webkit-text-stroke:0.3px #111111;">Tutorials</div>
<div id="t24" class="t" style="left:1074.75px;top:512.4px;font-size:26px;line-height:26px;color:#111111;letter-spacing:-0.876px;-webkit-text-stroke:0.3px #111111;">Documentation</div>
<div id="t25" class="t" style="left:1298.65px;top:512.4px;font-size:26px;line-height:26px;color:#111111;letter-spacing:-1.604px;-webkit-text-stroke:0.3px #111111;">News</div>
<div id="t26" class="t" style="left:2480.00px;top:519.2px;font-size:25px;line-height:25px;color:#444444;letter-spacing:1.213px;">Contact Support</div>
<svg class="a" style="left:2720px;top:518px;width:35px;height:26px;" viewBox="0 0 35 26" preserveAspectRatio="none"><rect x="0" y="0" width="35" height="26" rx="3.5" fill="#444"/><path d="M-1 6.5 L17.5 18 L36 6.5" fill="none" stroke="#fff" stroke-width="2.2"/></svg>
<svg class="a" style="left:2798px;top:515px;width:33px;height:32px;" viewBox="0 0 33 32" preserveAspectRatio="none"><path d="M22 1.5 Q26 0 31 2.5 Q33 4 32 9 Q29 20 20 27 Q14 31 6 32 Q2 32 1 29 Q0 25 2.5 23 L7 20 Q9 19 11 21 L12 23 Q18 19 21 12 L19 10.5 Q17.5 9 18.5 6.5 Z" fill="#444"/></svg>
<svg class="a" style="left:2875px;top:515px;width:33px;height:32px;" viewBox="0 0 33 32" preserveAspectRatio="none"><path d="M3 0 H30 Q33 0 33 3 V23 Q33 26 30 26 H19 L11 32 L11 26 H3 Q0 26 0 23 V3 Q0 0 3 0Z" fill="#444"/></svg>
<div id="t27" class="t" style="left:1843.0px;transform:translateX(-50%);top:598.5px;font-size:60px;line-height:60px;color:#111111;letter-spacing:1.410px;">Your Total</div>
<div id="t28" class="t" style="left:1843.0px;transform:translateX(-50%);top:675.8px;font-size:60px;line-height:60px;color:#76a3a6;font-weight:700;letter-spacing:1.029px;">Vehicle and Parts</div>
<div id="t29" class="t" style="left:1843.0px;transform:translateX(-50%);top:754.5px;font-size:60px;line-height:60px;color:#76a3a6;font-weight:700;letter-spacing:1.943px;">Inventory Management</div>
<div id="t30" class="t" style="left:1843.0px;transform:translateX(-50%);top:832.9px;font-size:60px;line-height:60px;color:#111111;letter-spacing:2.363px;">Solution</div>
<div class="a" style="left:612px;top:1074px;width:2492px;height:2px;background:#dee2e6;"></div>
<div class="a" style="left:632px;top:992px;width:254px;height:84px;background:#ffffff;border:2px solid #dee2e6;border-bottom:none;border-radius:8px 8px 0 0;"></div>
<div id="t31" class="t" style="left:665.75px;top:1018.9px;font-size:32px;line-height:32px;color:#495057;letter-spacing:-0.094px;-webkit-text-stroke:0.7px #495057;">Sales Orders</div>
<div id="t32" class="t" style="left:918.35px;top:1018.9px;font-size:32px;line-height:32px;color:#2f74f3;letter-spacing:0.435px;-webkit-text-stroke:0.7px #2f74f3;">Internet Orders</div>
<div id="t33" class="t" style="left:1208.35px;top:1018.9px;font-size:32px;line-height:32px;color:#2f74f3;letter-spacing:0.266px;-webkit-text-stroke:0.7px #2f74f3;">Quotes</div>
<div id="t34" class="t" style="left:1379.85px;top:1018.9px;font-size:32px;line-height:32px;color:#2f74f3;letter-spacing:0.269px;-webkit-text-stroke:0.7px #2f74f3;">Build Orders</div>
<div id="t35" class="t" style="left:1630.35px;top:1018.9px;font-size:32px;line-height:32px;color:#2f74f3;letter-spacing:0.053px;-webkit-text-stroke:0.7px #2f74f3;">Work Orders</div>
<div id="t36" class="t" style="left:1879.05px;top:1018.9px;font-size:32px;line-height:32px;color:#2f74f3;letter-spacing:0.124px;-webkit-text-stroke:0.7px #2f74f3;">Deliveries</div>
<div id="t37" class="t" style="left:2088.35px;top:1018.9px;font-size:32px;line-height:32px;color:#2f74f3;letter-spacing:0.102px;-webkit-text-stroke:0.7px #2f74f3;">Purchase Orders</div>
<div id="t38" class="t" style="left:2400.75px;top:1018.9px;font-size:32px;line-height:32px;color:#2f74f3;letter-spacing:0.034px;-webkit-text-stroke:0.7px #2f74f3;">Vehicle Bids</div>
<div class="a" style="left:628px;top:1093px;width:393px;height:759px;background:#ffffff;border:2px solid #dfdfdf;border-radius:8px;"></div>
<div class="a" style="left:630px;top:1095px;width:389px;height:94px;background:#f7f7f7;border-radius:6px 6px 0 0;"></div>
<div class="a" style="left:630px;top:1189px;width:389px;height:2px;background:#dfdfdf;"></div>
<div id="t39" class="t" style="left:668.65px;top:1123.5px;font-size:40px;line-height:40px;color:#212529;letter-spacing:0.302px;-webkit-text-stroke:1.3px #212529;">Filters</div>
<div id="t40" class="t" style="left:645.35px;top:1230.9px;font-size:32px;line-height:32px;color:#212529;letter-spacing:-0.254px;-webkit-text-stroke:0.7px #212529;">Date Range</div>
<div class="a" style="left:646px;top:1284px;width:357px;height:59px;background:#ffffff;border:2px solid #ced4da;border-radius:8px;"></div>
<div id="t41" class="t" style="left:663.47px;top:1299.3px;font-size:28px;line-height:28px;color:#495057;letter-spacing:-0.234px;-webkit-text-stroke:0.35px #495057;">Last 30 Days</div>
<svg class="a" style="left:961px;top:1304px;width:16px;height:20px;" viewBox="0 0 16 20" preserveAspectRatio="none"><path d="M8 0 L16 8 H0Z M0 12 H16 L8 20Z" fill="#343a40"/></svg>
<div id="t42" class="t" style="left:645.35px;top:1374.2px;font-size:32px;line-height:32px;color:#212529;letter-spacing:0.100px;-webkit-text-stroke:0.7px #212529;">From</div>
<div class="a" style="left:646px;top:1427px;width:357px;height:60px;background:#ffffff;border:2px solid #ced4da;border-radius:8px;"></div>
<div id="t43" class="t" style="left:664.47px;top:1443.6px;font-size:28px;line-height:28px;color:#495057;letter-spacing:1.643px;-webkit-text-stroke:0.35px #495057;">12/22/2024</div>
<svg class="a" style="left:956px;top:1444px;width:22px;height:24px;" viewBox="0 0 22 24" preserveAspectRatio="none"><rect x="1.2" y="4" width="19.6" height="18.8" rx="2" fill="none" stroke="#111" stroke-width="2.4"/><rect x="1" y="4" width="20" height="5" fill="#111"/><rect x="5" y="0" width="2.4" height="5" fill="#111"/><rect x="14.6" y="0" width="2.4" height="5" fill="#111"/></svg>
<div id="t44" class="t" style="left:647.35px;top:1517.9px;font-size:32px;line-height:32px;color:#212529;letter-spacing:-0.400px;-webkit-text-stroke:0.7px #212529;">To</div>
<div class="a" style="left:646px;top:1571px;width:357px;height:60px;background:#ffffff;border:2px solid #ced4da;border-radius:8px;"></div>
<div id="t45" class="t" style="left:665.47px;top:1588.3px;font-size:28px;line-height:28px;color:#495057;letter-spacing:1.243px;-webkit-text-stroke:0.35px #495057;">01/21/2025</div>
<svg class="a" style="left:956px;top:1588px;width:22px;height:24px;" viewBox="0 0 22 24" preserveAspectRatio="none"><rect x="1.2" y="4" width="19.6" height="18.8" rx="2" fill="none" stroke="#111" stroke-width="2.4"/><rect x="1" y="4" width="20" height="5" fill="#111"/><rect x="5" y="0" width="2.4" height="5" fill="#111"/><rect x="14.6" y="0" width="2.4" height="5" fill="#111"/></svg>
<div class="a" style="left:646px;top:1663px;width:357px;height:2px;background:#e3e3e3;"></div>
<div id="t46" class="t" style="left:645.35px;top:1720.4px;font-size:32px;line-height:32px;color:#212529;letter-spacing:0.181px;-webkit-text-stroke:0.7px #212529;">Salesperson</div>
<div class="a" style="left:646px;top:1773px;width:206px;height:62px;background:#ffffff;border:2px solid #6c757d;border-radius:8px;"></div>
<div class="a" style="left:720px;top:1773px;width:132px;height:62px;background:#565e64;border-radius:0 8px 8px 0;"></div>
<div id="t47" class="t" style="left:663.45px;top:1786.9px;font-size:32px;line-height:32px;color:#6c757d;letter-spacing:-3.956px;-webkit-text-stroke:0.3px #6c757d;">Me</div>
<div id="t48" class="t" style="left:739.15px;top:1786.9px;font-size:32px;line-height:32px;color:#ffffff;letter-spacing:-2.707px;-webkit-text-stroke:0.3px #ffffff;">Anyone</div>
<div class="a" style="left:1042px;top:1093px;width:2046px;height:417px;background:#ffffff;"></div>
<div class="a" style="left:1042px;top:1165px;width:2046px;height:68px;background:#f2f2f2;"></div>
<div class="a" style="left:2484px;top:1165px;width:219px;height:68px;background:#c8e6cf;"></div>
<div class="a" style="left:2484px;top:1233px;width:219px;height:69px;background:#c8e6cf;"></div>
<div class="a" style="left:1042px;top:1302px;width:2046px;height:69px;background:#f2f2f2;"></div>
<div class="a" style="left:2484px;top:1302px;width:219px;height:69px;background:#c8e6cf;"></div>
<div class="a" style="left:2484px;top:1371px;width:219px;height:70px;background:#c8e6cf;"></div>
<div class="a" style="left:1042px;top:1441px;width:2046px;height:69px;background:#f2f2f2;"></div>
<div class="a" style="left:2484px;top:1441px;width:219px;height:69px;background:#c8e6cf;"></div>
<div class="a" style="left:1041px;top:1093px;width:2px;height:417px;background:#dee2e6;"></div>
<div class="a" style="left:1157px;top:1093px;width:2px;height:417px;background:#dee2e6;"></div>
<div class="a" style="left:1341px;top:1093px;width:2px;height:417px;background:#dee2e6;"></div>
<div class="a" style="left:1609px;top:1093px;width:2px;height:417px;background:#dee2e6;"></div>
<div class="a" style="left:1877px;top:1093px;width:2px;height:417px;background:#dee2e6;"></div>
<div class="a" style="left:2097px;top:1093px;width:2px;height:417px;background:#dee2e6;"></div>
<div class="a" style="left:2263px;top:1093px;width:2px;height:417px;background:#dee2e6;"></div>
<div class="a" style="left:2483px;top:1093px;width:2px;height:417px;background:#dee2e6;"></div>
<div class="a" style="left:2701px;top:1093px;width:2px;height:417px;background:#dee2e6;"></div>
<div class="a" style="left:2942px;top:1093px;width:2px;height:417px;background:#dee2e6;"></div>
<div class="a" style="left:3086px;top:1093px;width:2px;height:417px;background:#dee2e6;"></div>
<div class="a" style="left:1042px;top:1092px;width:2046px;height:2px;background:#dee2e6;"></div>
<div class="a" style="left:1042px;top:1161px;width:2046px;height:4px;background:#dee2e6;"></div>
<div class="a" style="left:1042px;top:1232px;width:2046px;height:2px;background:#dee2e6;"></div>
<div class="a" style="left:1042px;top:1301px;width:2046px;height:2px;background:#dee2e6;"></div>
<div class="a" style="left:1042px;top:1370px;width:2046px;height:2px;background:#dee2e6;"></div>
<div class="a" style="left:1042px;top:1440px;width:2046px;height:2px;background:#dee2e6;"></div>
<div class="a" style="left:1042px;top:1509px;width:2046px;height:2px;background:#dee2e6;"></div>
<div id="t49" class="t" style="right:2069.32px;top:1111.9px;font-size:32px;line-height:32px;color:#212529;font-weight:700;letter-spacing:0.036px;-webkit-text-stroke:0.3px #212529;">Sale #</div>
<div id="t50" class="t" style="left:1169.35px;top:1111.9px;font-size:32px;line-height:32px;color:#212529;font-weight:700;letter-spacing:0.713px;-webkit-text-stroke:0.3px #212529;">Date</div>
<div id="t51" class="t" style="left:1351.55px;top:1111.9px;font-size:32px;line-height:32px;color:#212529;font-weight:700;letter-spacing:-0.341px;-webkit-text-stroke:0.3px #212529;">Bill To</div>
<div id="t52" class="t" style="left:1621.95px;top:1111.9px;font-size:32px;line-height:32px;color:#212529;font-weight:700;letter-spacing:-0.482px;-webkit-text-stroke:0.3px #212529;">Ship To</div>
<div id="t53" class="t" style="right:1127.79px;top:1111.9px;font-size:32px;line-height:32px;color:#212529;font-weight:700;letter-spacing:0.472px;-webkit-text-stroke:0.3px #212529;">Subtotal</div>
<div id="t54" class="t" style="right:964.64px;top:1111.9px;font-size:32px;line-height:32px;color:#212529;font-weight:700;letter-spacing:-0.784px;-webkit-text-stroke:0.3px #212529;">Tax</div>
<div id="t55" class="t" style="right:742.00px;top:1111.9px;font-size:32px;line-height:32px;color:#212529;font-weight:700;letter-spacing:0.457px;-webkit-text-stroke:0.3px #212529;">Total</div>
<div id="t56" class="t" style="right:523.68px;top:1111.9px;font-size:32px;line-height:32px;color:#212529;font-weight:700;letter-spacing:-0.077px;-webkit-text-stroke:0.3px #212529;">Paid</div>
<div id="t57" class="t" style="left:2714.75px;top:1111.9px;font-size:32px;line-height:32px;color:#212529;font-weight:700;letter-spacing:0.083px;-webkit-text-stroke:0.3px #212529;">Salesperson</div>
<div id="t58" class="t" style="right:139.79px;top:1111.9px;font-size:32px;line-height:32px;color:#212529;font-weight:700;letter-spacing:0.562px;-webkit-text-stroke:0.3px #212529;">Quote #</div>
<svg class="a" style="left:1251px;top:1117px;width:21px;height:21px;" viewBox="0 0 21 21" preserveAspectRatio="none"><path d="M2.5 0.3 H18.5 Q21.2 0.6 20 3.2 L11.8 19.5 Q10.5 21.4 9.2 19.5 L1 3.2 Q-0.2 0.6 2.5 0.3Z" fill="#212529"/></svg>
<div id="t59" class="t" style="right:2066.55px;top:1182.9px;font-size:32px;line-height:32px;color:#212529;letter-spacing:2.003px;-webkit-text-stroke:0.7px #212529;">94</div>
<div id="t60" class="t" style="left:1168.35px;top:1182.9px;font-size:32px;line-height:32px;color:#212529;letter-spacing:-0.058px;-webkit-text-stroke:0.7px #212529;">1/10/2025</div>
<div id="t61" class="t" style="left:1354.75px;top:1182.9px;font-size:32px;line-height:32px;color:#212529;letter-spacing:0.385px;-webkit-text-stroke:0.7px #212529;">Justin's Trucks</div>
<div id="t62" class="t" style="left:1622.15px;top:1182.9px;font-size:32px;line-height:32px;color:#212529;letter-spacing:0.385px;-webkit-text-stroke:0.7px #212529;">Justin's Trucks</div>
<div id="t63" class="t" style="right:1128.15px;top:1182.9px;font-size:32px;line-height:32px;color:#212529;letter-spacing:1.404px;-webkit-text-stroke:0.7px #212529;">$420.00</div>
<div id="t64" class="t" style="right:961.51px;top:1182.9px;font-size:32px;line-height:32px;color:#212529;letter-spacing:1.544px;-webkit-text-stroke:0.7px #212529;">$21.00</div>
<div id="t65" class="t" style="right:742.45px;top:1182.9px;font-size:32px;line-height:32px;color:#212529;letter-spacing:1.304px;-webkit-text-stroke:0.7px #212529;">$441.00</div>
<div id="t66" class="t" style="right:523.25px;top:1182.9px;font-size:32px;line-height:32px;color:#212529;letter-spacing:1.304px;-webkit-text-stroke:0.7px #212529;">$441.00</div>
<div id="t67" class="t" style="left:2713.95px;top:1182.9px;font-size:32px;line-height:32px;color:#212529;letter-spacing:0.383px;-webkit-text-stroke:0.7px #212529;">demo</div>
<div id="t68" class="t" style="right:2066.55px;top:1250.9px;font-size:32px;line-height:32px;color:#212529;letter-spacing:2.003px;-webkit-text-stroke:0.7px #212529;">93</div>
<div id="t69" class="t" style="left:1168.35px;top:1250.9px;font-size:32px;line-height:32px;color:#212529;letter-spacing:0.033px;-webkit-text-stroke:0.7px #212529;">1/7/2025</div>
<div id="t70" class="t" style="left:1353.75px;top:1250.9px;font-size:32px;line-height:32px;color:#212529;letter-spacing:0.165px;-webkit-text-stroke:0.7px #212529;">Cash's Trucks</div>
<div id="t71" class="t" style="left:1621.15px;top:1250.9px;font-size:32px;line-height:32px;color:#212529;letter-spacing:0.165px;-webkit-text-stroke:0.7px #212529;">Cash's Trucks</div>
<div id="t72" class="t" style="right:1128.42px;top:1250.9px;font-size:32px;line-height:32px;color:#212529;letter-spacing:1.130px;-webkit-text-stroke:0.7px #212529;">$1.00</div>
<div id="t73" class="t" style="right:961.67px;top:1250.9px;font-size:32px;line-height:32px;color:#212529;letter-spacing:1.380px;-webkit-text-stroke:0.7px #212529;">$0.07</div>
<div id="t74" class="t" style="right:742.80px;top:1250.9px;font-size:32px;line-height:32px;color:#212529;letter-spacing:0.955px;-webkit-text-stroke:0.7px #212529;">$1.07</div>
<div id="t75" class="t" style="right:523.60px;top:1250.9px;font-size:32px;line-height:32px;color:#212529;letter-spacing:0.955px;-webkit-text-stroke:0.7px #212529;">$1.07</div>
<div id="t76" class="t" style="left:2713.95px;top:1250.9px;font-size:32px;line-height:32px;color:#212529;letter-spacing:0.383px;-webkit-text-stroke:0.7px #212529;">demo</div>
<div id="t77" class="t" style="right:2066.55px;top:1319.9px;font-size:32px;line-height:32px;color:#212529;letter-spacing:2.003px;-webkit-text-stroke:0.7px #212529;">92</div>
<div id="t78" class="t" style="left:1168.35px;top:1319.9px;font-size:32px;line-height:32px;color:#212529;letter-spacing:0.033px;-webkit-text-stroke:0.7px #212529;">1/7/2025</div>
<div id="t79" class="t" style="left:1353.75px;top:1319.9px;font-size:32px;line-height:32px;color:#212529;letter-spacing:0.165px;-webkit-text-stroke:0.7px #212529;">Cash's Trucks</div>
<div id="t80" class="t" style="left:1621.15px;top:1319.9px;font-size:32px;line-height:32px;color:#212529;letter-spacing:0.165px;-webkit-text-stroke:0.7px #212529;">Cash's Trucks</div>
<div id="t81" class="t" style="right:1128.42px;top:1319.9px;font-size:32px;line-height:32px;color:#212529;letter-spacing:1.130px;-webkit-text-stroke:0.7px #212529;">$1.00</div>
<div id="t82" class="t" style="right:961.67px;top:1319.9px;font-size:32px;line-height:32px;color:#212529;letter-spacing:1.380px;-webkit-text-stroke:0.7px #212529;">$0.07</div>
<div id="t83" class="t" style="right:742.80px;top:1319.9px;font-size:32px;line-height:32px;color:#212529;letter-spacing:0.955px;-webkit-text-stroke:0.7px #212529;">$1.07</div>
<div id="t84" class="t" style="right:523.60px;top:1319.9px;font-size:32px;line-height:32px;color:#212529;letter-spacing:0.955px;-webkit-text-stroke:0.7px #212529;">$1.07</div>
<div id="t85" class="t" style="left:2713.95px;top:1319.9px;font-size:32px;line-height:32px;color:#212529;letter-spacing:0.383px;-webkit-text-stroke:0.7px #212529;">demo</div>
<div id="t86" class="t" style="right:2066.55px;top:1388.9px;font-size:32px;line-height:32px;color:#212529;letter-spacing:2.003px;-webkit-text-stroke:0.7px #212529;">91</div>
<div id="t87" class="t" style="left:1168.35px;top:1388.9px;font-size:32px;line-height:32px;color:#212529;letter-spacing:0.033px;-webkit-text-stroke:0.7px #212529;">1/7/2025</div>
<div id="t88" class="t" style="left:1353.75px;top:1388.9px;font-size:32px;line-height:32px;color:#212529;letter-spacing:0.165px;-webkit-text-stroke:0.7px #212529;">Cash's Trucks</div>
<div id="t89" class="t" style="left:1621.15px;top:1388.9px;font-size:32px;line-height:32px;color:#212529;letter-spacing:0.165px;-webkit-text-stroke:0.7px #212529;">Cash's Trucks</div>
<div id="t90" class="t" style="right:1128.42px;top:1388.9px;font-size:32px;line-height:32px;color:#212529;letter-spacing:1.130px;-webkit-text-stroke:0.7px #212529;">$1.00</div>
<div id="t91" class="t" style="right:961.67px;top:1388.9px;font-size:32px;line-height:32px;color:#212529;letter-spacing:1.380px;-webkit-text-stroke:0.7px #212529;">$0.07</div>
<div id="t92" class="t" style="right:742.80px;top:1388.9px;font-size:32px;line-height:32px;color:#212529;letter-spacing:0.955px;-webkit-text-stroke:0.7px #212529;">$1.07</div>
<div id="t93" class="t" style="right:523.60px;top:1388.9px;font-size:32px;line-height:32px;color:#212529;letter-spacing:0.955px;-webkit-text-stroke:0.7px #212529;">$1.07</div>
<div id="t94" class="t" style="left:2713.95px;top:1388.9px;font-size:32px;line-height:32px;color:#212529;letter-spacing:0.383px;-webkit-text-stroke:0.7px #212529;">demo</div>
<div id="t95" class="t" style="right:2066.55px;top:1458.9px;font-size:32px;line-height:32px;color:#212529;letter-spacing:2.003px;-webkit-text-stroke:0.7px #212529;">90</div>
<div id="t96" class="t" style="left:1168.35px;top:1458.9px;font-size:32px;line-height:32px;color:#212529;letter-spacing:0.033px;-webkit-text-stroke:0.7px #212529;">1/7/2025</div>
<div id="t97" class="t" style="left:1353.75px;top:1458.9px;font-size:32px;line-height:32px;color:#212529;letter-spacing:0.165px;-webkit-text-stroke:0.7px #212529;">Cash's Trucks</div>
<div id="t98" class="t" style="left:1621.15px;top:1458.9px;font-size:32px;line-height:32px;color:#212529;letter-spacing:0.165px;-webkit-text-stroke:0.7px #212529;">Cash's Trucks</div>
<div id="t99" class="t" style="right:1128.34px;top:1458.9px;font-size:32px;line-height:32px;color:#212529;letter-spacing:1.216px;-webkit-text-stroke:0.7px #212529;">$14,400.00</div>
<div id="t100" class="t" style="right:961.65px;top:1458.9px;font-size:32px;line-height:32px;color:#212529;letter-spacing:1.404px;-webkit-text-stroke:0.7px #212529;">$936.00</div>
<div id="t101" class="t" style="right:742.54px;top:1458.9px;font-size:32px;line-height:32px;color:#212529;letter-spacing:1.216px;-webkit-text-stroke:0.7px #212529;">$15,336.00</div>
<div id="t102" class="t" style="right:523.34px;top:1458.9px;font-size:32px;line-height:32px;color:#212529;letter-spacing:1.216px;-webkit-text-stroke:0.7px #212529;">$15,336.00</div>
<div id="t103" class="t" style="left:2713.95px;top:1458.9px;font-size:32px;line-height:32px;color:#212529;letter-spacing:0.383px;-webkit-text-stroke:0.7px #212529;">demo</div>
</div></body></html>
